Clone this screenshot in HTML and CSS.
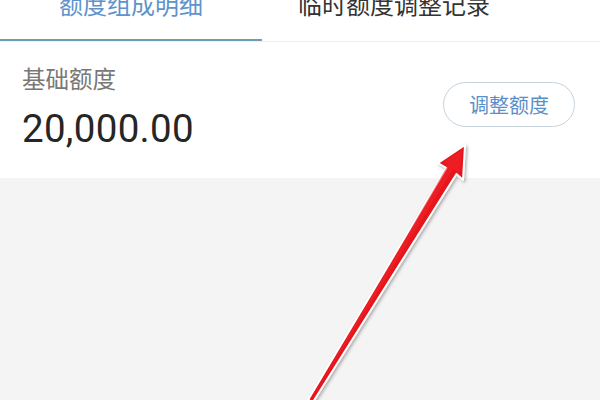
FILE: index.html
```
<!DOCTYPE html>
<html lang="zh">
<head>
<meta charset="utf-8">
<link rel="stylesheet" href="styles.css">
</head>
<body>
<div class="page">
  <div class="tabs">
    <div class="tab tab-active">额度组成明细</div>
    <div class="tab tab-second">临时额度调整记录</div>
  </div>
  <div class="card">
    <div class="info">
      <div class="label">基础额度</div>
      <div class="amount">20,000.00</div>
    </div>
    <div class="btn">调整额度</div>
  </div>
  <div class="rest"></div>
  <svg class="arrow" width="600" height="400" viewBox="0 0 600 400">
    <defs>
      <filter id="sh" x="-20%" y="-20%" width="140%" height="140%">
        <feDropShadow dx="1.5" dy="1.5" stdDeviation="1.5" flood-color="#555" flood-opacity="0.45"/>
      </filter>
    </defs>
    <polygon filter="url(#sh)" points="465,145 463,180 456.5,174 313,402 308,400 446.5,168 438,163" fill="#e5121b" stroke="#ffffff" stroke-width="2" stroke-linejoin="round"/>
    <polygon points="462,150 459,173 453,169 311,400 448,165 443,162" fill="#f0242a" opacity="0.6"/>
  </svg>
</div>
</body>
</html>
```
FILE: styles.css
```
html, body {
  margin: 0;
  padding: 0;
  background: #f4f4f4;
}
.page {
  position: relative;
  width: 600px;
  height: 400px;
  overflow: hidden;
  font-family: "Noto Sans CJK SC", "Noto Sans", sans-serif;
  background: #f4f4f4;
}
.tabs {
  display: flex;
  margin-top: -8px;
  height: 50px;
  background: #ffffff;
  border-bottom: 1px solid #eeeeee;
  box-sizing: border-box;
}
.tab {
  font-size: 24px;
  line-height: 24px;
  text-align: center;
  box-sizing: border-box;
  height: 49px;
}
.tab-active {
  width: 262px;
  color: #5e93cb;
  border-bottom: 2px solid #6c9fb6;
}
.tab-second {
  width: 264px;
  color: #333333;
}
.card {
  display: flex;
  justify-content: space-between;
  align-items: flex-start;
  background: #ffffff;
  padding: 24px 25px 30px 22px;
  height: 136px;
  box-sizing: border-box;
}
.label {
  font-size: 23.5px;
  line-height: 24px;
  color: #777777;
}
.amount {
  margin-top: 20px;
  font-family: Roboto, "Liberation Sans", sans-serif;
  font-size: 38.5px;
  line-height: 38px;
  color: #262626;
  letter-spacing: 0.3px;
}
.btn {
  margin-top: 16px;
  width: 132px;
  height: 45px;
  box-sizing: border-box;
  border: 1px solid #c6d3dd;
  border-radius: 23px;
  display: flex;
  align-items: center;
  justify-content: center;
  font-size: 20px;
  color: #5b8fc9;
}
.rest {
  height: 222px;
  background: #f4f4f4;
}
.arrow {
  position: absolute;
  left: 0;
  top: 0;
}
```
